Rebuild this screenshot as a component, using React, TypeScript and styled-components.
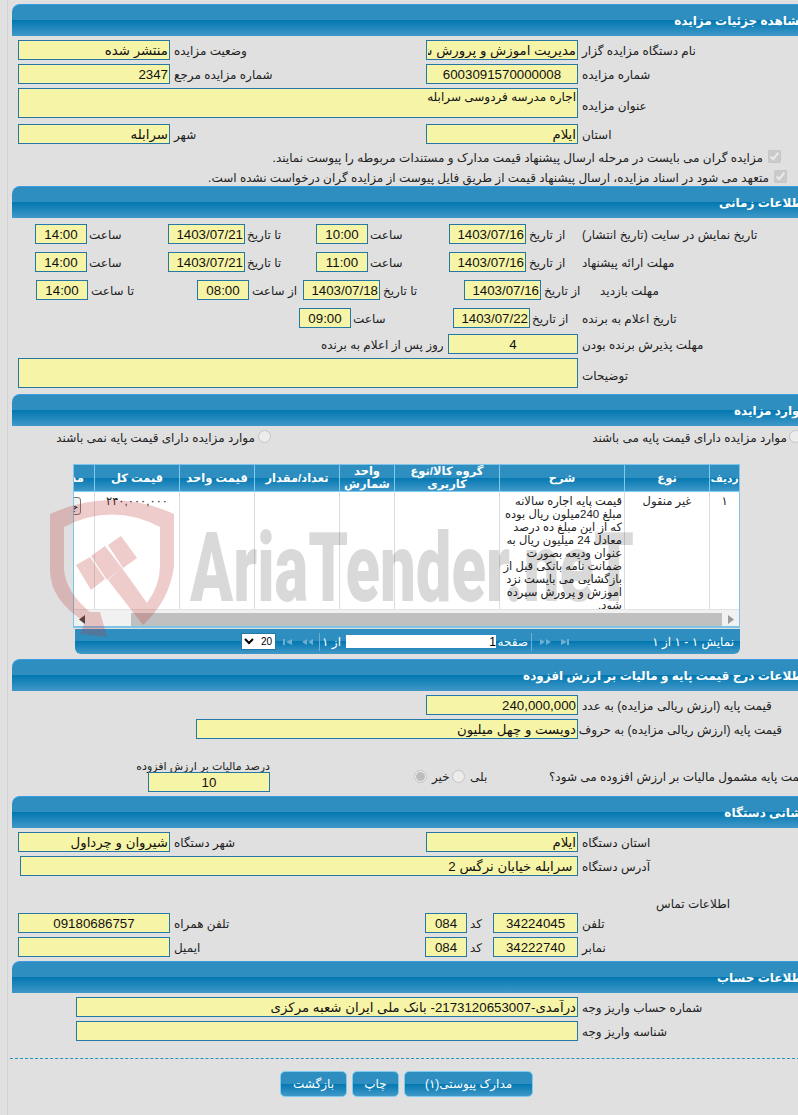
import React from 'react';
import styled, { createGlobalStyle } from 'styled-components';

/**
 * Shared values.
 */

const fontStack = '"Liberation Sans", "DejaVu Sans", sans-serif';
const barGradient = 'linear-gradient(to bottom, #2e8ebf 0%, #2e8ebf 49%, #0478b1 50%, #4098c8 100%)';
const gridColumns = '30px 85px 125px 105px 55px 85px 75px 85px 21px';

/**
 * `GlobalStyle` component.
 */

const GlobalStyle = createGlobalStyle`
  html, body {
    background: #e0e0e0;
    margin: 0;
    overflow: hidden;
    padding: 0;
  }
`;

/**
 * `Page` styled component.
 */

const Page = styled.div`
  color: #222;
  font-family: ${fontStack};
  font-size: 12px;
  height: 1115px;
  overflow: hidden;
  position: relative;
  width: 798px;
`;

/**
 * `Content` styled component.
 */

const Content = styled.main`
  border-left: 1px solid #d2d2d2;
  box-sizing: border-box;
  height: 1115px;
  margin-left: 7px;
  padding: 4px 0 0 4px;
  width: 1000px;
`;

/**
 * `SectionHeader` styled component.
 */

const SectionHeader = styled.h2<{ $mt?: number }>`
  background: ${barGradient};
  border-radius: 8px 0 0 0;
  border-top: 1px solid #3a9be0;
  box-sizing: border-box;
  color: #fff;
  direction: rtl;
  font-size: 12px;
  font-weight: bold;
  height: 32px;
  line-height: 33px;
  margin: ${p => p.$mt ?? 0}px 0 0;
  padding-right: 5px;
  white-space: nowrap;
  width: 800px;
`;

/**
 * `Row` styled component.
 */

const Row = styled.div<{ $mt?: number; $h?: number }>`
  align-items: center;
  display: flex;
  height: ${p => p.$h ?? 20}px;
  margin-top: ${p => p.$mt ?? 4}px;
`;

/**
 * `Field` styled component.
 */

const Field = styled.input.attrs({ dir: 'rtl', readOnly: true })<{
  $w: number;
  $ml?: number;
  $center?: boolean;
}>`
  background: #f6f4a6;
  border: 1px solid #2378a8;
  border-radius: 0;
  box-sizing: border-box;
  color: #111;
  flex: none;
  font-family: ${fontStack};
  font-size: 13.3px;
  height: 20px;
  margin: 0 0 0 ${p => p.$ml ?? 0}px;
  outline: none;
  padding: 0 1px;
  text-align: ${p => (p.$center ? 'center' : 'right')};
  width: ${p => p.$w}px;
`;

/**
 * `TextField` styled component.
 */

const TextField = styled.textarea.attrs({ dir: 'rtl', readOnly: true })<{
  $w: number;
  $ml?: number;
  $h: number;
}>`
  background: #f6f4a6;
  border: 1px solid #2378a8;
  box-sizing: border-box;
  color: #111;
  flex: none;
  font-family: ${fontStack};
  font-size: 12px;
  height: ${p => p.$h}px;
  margin: 0 0 0 ${p => p.$ml ?? 0}px;
  outline: none;
  overflow: hidden;
  padding: 1px 1px 0;
  resize: none;
  width: ${p => p.$w}px;
`;

/**
 * `Label` styled component.
 */

const Label = styled.span<{ $w: number; $ml?: number; $end?: boolean; $pt?: number }>`
  direction: rtl;
  flex: none;
  margin-left: ${p => p.$ml ?? 0}px;
  padding-top: ${p => p.$pt ?? 2}px;
  text-align: ${p => (p.$end ? 'right' : 'left')};
  white-space: nowrap;
  width: ${p => p.$w}px;
`;

/**
 * `Check` styled component.
 */

const Check = styled.input.attrs({ type: 'checkbox', disabled: true, defaultChecked: true })<{
  $ml: number;
}>`
  flex: none;
  height: 13px;
  margin: 0 0 0 ${p => p.$ml}px;
  width: 13px;
`;

/**
 * `Radio` styled component.
 */

const Radio = styled.input.attrs({ type: 'radio', disabled: true })<{
  $ml?: number;
  $on?: boolean;
}>`
  appearance: none;
  background: ${p => (p.$on ? 'radial-gradient(circle, #bdbdbd 0 4px, #ececec 5px)' : '#ececec')};
  border: 1px solid #c4c4c4;
  border-radius: 50%;
  box-sizing: border-box;
  flex: none;
  height: 13px;
  margin: 0 0 0 ${p => p.$ml ?? 0}px;
  width: 13px;
`;

/**
 * `Grid` styled component.
 */

const Grid = styled.div`
  background: #fff;
  border: 1px solid #7cc4e8;
  border-width: 1px 1px 2px 1px;
  box-sizing: border-box;
  direction: rtl;
  height: 164px;
  margin: 21px 0 0 61px;
  overflow: hidden;
  width: 667px;
`;

/**
 * `GridHead` styled component.
 */

const GridHead = styled.div`
  background: ${barGradient};
  border-bottom: 1px solid #7ccbf0;
  box-sizing: border-box;
  display: grid;
  grid-template-columns: ${gridColumns};
  height: 27px;
`;

/**
 * `HeadCell` styled component.
 */

const HeadCell = styled.div<{ $small?: boolean }>`
  align-items: center;
  border-left: 1px solid #7ccbf0;
  box-sizing: border-box;
  color: #fff;
  display: flex;
  font-size: ${p => (p.$small ? 10.5 : 11.5)}px;
  font-weight: bold;
  justify-content: center;
  line-height: 13px;
  overflow: hidden;
  text-align: center;
  white-space: pre-line;
`;

/**
 * `ClippedHeadCell` styled component.
 */

const ClippedHeadCell = styled(HeadCell)`
  border-left: 0;
  justify-content: flex-start;
  padding-right: 10px;
  white-space: nowrap;
`;

/**
 * `GridBody` styled component.
 */

const GridBody = styled.div`
  border-bottom: 1px solid #e2e2e2;
  box-sizing: border-box;
  display: grid;
  grid-template-columns: ${gridColumns};
  height: 118px;
`;

/**
 * `BodyCell` styled component.
 */

const BodyCell = styled.div<{ $center?: boolean }>`
  border-left: 1px solid #dcdcdc;
  box-sizing: border-box;
  color: #222;
  font-size: 11.5px;
  line-height: 13px;
  overflow: hidden;
  padding: 3px 2px 0;
  text-align: ${p => (p.$center ? 'center' : 'right')};
`;

/**
 * `ButtonCell` styled component.
 */

const ButtonCell = styled(BodyCell)`
  border-left: 0;
  padding: 0 13px 0 0;
`;

/**
 * `CellButton` styled component.
 */

const CellButton = styled.button`
  background: #f0f0f0;
  border: 1px solid #777;
  border-radius: 3px;
  font-family: ${fontStack};
  font-size: 11px;
  height: 18px;
  margin: 5px 0 0 0;
  padding: 0 2px;
  text-align: right;
  white-space: nowrap;
  width: 50px;
`;

/**
 * `ScrollBar` styled component.
 */

const ScrollBar = styled.div`
  align-items: center;
  background: #f1f1f1;
  display: flex;
  height: 16px;
  padding: 1px 5px 0 5px;
`;

/**
 * `ScrollThumb` styled component.
 */

const ScrollThumb = styled.div`
  background: #c0c0c0;
  flex: 1;
  height: 13px;
  margin: 0 6px 0 46px;
`;

/**
 * `Pager` styled component.
 */

const Pager = styled.div`
  align-items: center;
  background: ${barGradient};
  border-radius: 0 0 6px 6px;
  box-sizing: border-box;
  color: #fff;
  direction: rtl;
  display: flex;
  height: 25px;
  margin: 1px 0 0 63px;
  padding-right: 6px;
  width: 665px;
`;

/**
 * `PagerText` styled component.
 */

const PagerText = styled.span<{ $w: number; $ms?: number }>`
  flex: none;
  margin-inline-start: ${p => p.$ms ?? 0}px;
  white-space: nowrap;
  width: ${p => p.$w}px;
`;

/**
 * `PagerRule` styled component.
 */

const PagerRule = styled.span<{ $ms: number }>`
  background: #6fb0d0;
  flex: none;
  height: 18px;
  margin-inline-start: ${p => p.$ms}px;
  width: 1px;
`;

/**
 * `PagerIcons` styled component.
 */

const PagerIcons = styled.svg<{ $ms: number }>`
  flex: none;
  height: 8px;
  margin-inline-start: ${p => p.$ms}px;
  width: 30px;
`;

/**
 * `PageInput` styled component.
 */

const PageInput = styled.input.attrs({ dir: 'rtl', readOnly: true })`
  background: #fff;
  border: 0;
  box-sizing: border-box;
  color: #000;
  flex: none;
  font-family: ${fontStack};
  font-size: 12px;
  height: 13px;
  margin: 0 4px 0 0;
  outline: none;
  padding: 0;
  width: 150px;
`;

/**
 * `PageSize` styled component.
 */

const PageSize = styled.span`
  align-items: center;
  background: #fff;
  border: 1px solid #2378a8;
  box-sizing: border-box;
  color: #000;
  direction: ltr;
  display: flex;
  flex: none;
  font-size: 10px;
  height: 17px;
  justify-content: space-between;
  margin-right: 7px;
  padding: 0 3px 0 2px;
  width: 35px;
`;

/**
 * `Dashed` styled component.
 */

const Dashed = styled.hr`
  border: 0;
  border-top: 1px dashed #2e8ebf;
  margin: 17px 0 0 -2px;
  width: 790px;
`;

/**
 * `Actions` styled component.
 */

const Actions = styled.div`
  display: flex;
  gap: 5px;
  margin: 12px 0 0 268px;
`;

/**
 * `ActionButton` styled component.
 */

const ActionButton = styled.button<{ $w: number }>`
  background: ${barGradient};
  border: 1px solid #7ccbf0;
  border-radius: 5px;
  color: #fff;
  direction: rtl;
  font-family: ${fontStack};
  font-size: 12px;
  height: 26px;
  padding: 0;
  width: ${p => p.$w}px;
`;

/**
 * `TaxColumn` styled component.
 */

const TaxColumn = styled.div`
  display: flex;
  flex: none;
  flex-direction: column;
  margin-left: 123px;
  width: 135px;
`;

/**
 * `TaxLabel` styled component.
 */

const TaxLabel = styled.span`
  direction: rtl;
  font-size: 11px;
  height: 12px;
  line-height: 12px;
  white-space: nowrap;
`;

/**
 * `TaxRow` styled component.
 */

const TaxRow = styled.div`
  display: flex;
  height: 32px;
  margin: 21px 0 4px;
`;

/**
 * `TaxChoice` styled component.
 */

const TaxChoice = styled.div`
  align-items: center;
  display: flex;
  height: 20px;
  margin-top: 6px;
`;

/**
 * `Watermark` styled component.
 */

const Watermark = styled.div`
  inset: 0;
  pointer-events: none;
  position: absolute;
`;

/**
 * `WatermarkShield` styled component.
 */

const WatermarkShield = styled.svg`
  height: 145px;
  left: 45px;
  position: absolute;
  top: 495px;
  width: 140px;
`;

/**
 * `WatermarkName` styled component.
 */

const WatermarkName = styled.span`
  color: rgba(0, 0, 0, 0.15);
  font-family: Roboto, sans-serif;
  font-size: 96px;
  font-weight: 900;
  left: 190px;
  line-height: 96px;
  position: absolute;
  top: 520px;
  transform: scaleX(0.66);
  transform-origin: left center;
  white-space: nowrap;
`;

/**
 * `App` component.
 */

export default function App() {
  return (
    <Page>
      <GlobalStyle />
      <Content>
        <SectionHeader>{'مشاهده جزئیات مزایده'}</SectionHeader>
        <Row>
          <Field $ml={6} $w={152} value={'منتشر شده'} />
          <Label $ml={4} $w={252}>{'وضعیت مزایده'}</Label>
          <Field $w={152} value={'مدیریت اموزش و پرورش شهرستان سرابله'} />
          <Label $ml={4} $w={200}>{'نام دستگاه مزایده گزار'}</Label>
        </Row>
        <Row>
          <Field $ml={6} $w={152} value={'2347'} />
          <Label $ml={4} $w={252}>{'شماره مزایده مرجع'}</Label>
          <Field $center $w={152} value={'6003091570000008'} />
          <Label $ml={4} $w={200}>{'شماره مزایده'}</Label>
        </Row>
        <Row $h={30}>
          <TextField $h={30} $ml={6} $w={560} value={'اجاره مدرسه فردوسی سرابله'} />
          <Label $ml={4} $pt={5} $w={200}>{'عنوان مزایده'}</Label>
        </Row>
        <Row $mt={6}>
          <Field $ml={6} $w={152} value={'سرابله'} />
          <Label $ml={4} $w={252}>{'شهر'}</Label>
          <Field $w={152} value={'ایلام'} />
          <Label $ml={4} $w={200}>{'استان'}</Label>
        </Row>
        <Row $h={19} $mt={3}>
          <Label $end $w={751}>{'مزایده گران می بایست در مرحله ارسال پیشنهاد قیمت مدارک و مستندات مربوطه را پیوست نمایند.'}</Label>
          <Check $ml={5} />
        </Row>
        <Row $h={19} $mt={1}>
          <Label $end $w={757}>{'متعهد می شود در اسناد مزایده، ارسال پیشنهاد قیمت از طریق فایل پیوست از مزایده گران درخواست نشده است.'}</Label>
          <Check $ml={5} />
        </Row>

        <SectionHeader>{'اطلاعات زمانی'}</SectionHeader>
        <Row $mt={6}>
          <Field $center $ml={23} $w={52} value={'14:00'} />
          <Label $ml={2} $w={79}>{'ساعت'}</Label>
          <Field $w={77} value={'1403/07/21'} />
          <Label $ml={2} $w={69}>{'تا تاریخ'}</Label>
          <Field $center $w={52} value={'10:00'} />
          <Label $ml={2} $w={79}>{'ساعت'}</Label>
          <Field $w={77} value={'1403/07/16'} />
          <Label $ml={3} $w={53}>{'از تاریخ'}</Label>
          <Label $w={200}>{'تاریخ نمایش در سایت (تاریخ انتشار)'}</Label>
        </Row>
        <Row $mt={8}>
          <Field $center $ml={23} $w={52} value={'14:00'} />
          <Label $ml={2} $w={79}>{'ساعت'}</Label>
          <Field $w={77} value={'1403/07/21'} />
          <Label $ml={2} $w={69}>{'تا تاریخ'}</Label>
          <Field $center $w={52} value={'11:00'} />
          <Label $ml={2} $w={79}>{'ساعت'}</Label>
          <Field $w={77} value={'1403/07/16'} />
          <Label $ml={3} $w={53}>{'از تاریخ'}</Label>
          <Label $w={200}>{'مهلت ارائه پیشنهاد'}</Label>
        </Row>
        <Row $mt={8}>
          <Field $center $ml={24} $w={52} value={'14:00'} />
          <Label $ml={3} $w={106}>{'تا ساعت'}</Label>
          <Field $center $w={52} value={'08:00'} />
          <Label $ml={3} $w={51}>{'از ساعت'}</Label>
          <Field $w={77} value={'1403/07/18'} />
          <Label $ml={3} $w={81}>{'تا تاریخ'}</Label>
          <Field $w={77} value={'1403/07/16'} />
          <Label $ml={3} $w={56}>{'از تاریخ'}</Label>
          <Label $w={150}>{'مهلت بازدید'}</Label>
        </Row>
        <Row $mt={8}>
          <Field $center $ml={287} $w={52} value={'09:00'} />
          <Label $ml={2} $w={100}>{'ساعت'}</Label>
          <Field $w={77} value={'1403/07/22'} />
          <Label $ml={2} $w={50}>{'از تاریخ'}</Label>
          <Label $w={200}>{'تاریخ اعلام به برنده'}</Label>
        </Row>
        <Row $mt={6}>
          <Label $ml={309} $w={127}>{'روز پس از اعلام به برنده'}</Label>
          <Field $center $w={130} value={'4'} />
          <Label $ml={4} $w={200}>{'مهلت پذیرش برنده بودن'}</Label>
        </Row>
        <Row $h={30}>
          <TextField $h={30} $ml={6} $w={560} value={''} />
          <Label $ml={4} $pt={5} $w={200}>{'توضیحات'}</Label>
        </Row>

        <SectionHeader $mt={6}>{'موارد مزایده'}</SectionHeader>
        <Row $h={13}>
          <Label $end $ml={43} $w={200}>{'موارد مزایده دارای قیمت پایه نمی باشند'}</Label>
          <Radio $ml={3} />
          <Label $end $ml={322} $w={194}>{'موارد مزایده دارای قیمت پایه می باشند'}</Label>
          <Radio $ml={2} />
        </Row>
        <Grid>
          <GridHead>
            <HeadCell $small>{'ردیف'}</HeadCell>
            <HeadCell>{'نوع'}</HeadCell>
            <HeadCell>{'شرح'}</HeadCell>
            <HeadCell>{'گروه کالا/نوع\nکاربری'}</HeadCell>
            <HeadCell>{'واحد\nشمارش'}</HeadCell>
            <HeadCell>{'تعداد/مقدار'}</HeadCell>
            <HeadCell>{'قیمت واحد'}</HeadCell>
            <HeadCell>{'قیمت کل'}</HeadCell>
            <ClippedHeadCell>{'مدارک'}</ClippedHeadCell>
          </GridHead>
          <GridBody>
            <BodyCell $center>{'۱'}</BodyCell>
            <BodyCell $center>{'غیر منقول'}</BodyCell>
            <BodyCell>
              {'قیمت پایه اجاره سالانه مبلغ 240میلون ریال بوده که از این مبلغ ده درصد معادل 24 میلیون ریال به عنوان ودیعه بصورت ضمانت نامه بانکی قبل از بازگشایی می بایست نزد اموزش و پرورش سپرده شود.'}
            </BodyCell>
            <BodyCell />
            <BodyCell />
            <BodyCell />
            <BodyCell />
            <BodyCell $center>{'۲۴۰,۰۰۰,۰۰۰'}</BodyCell>
            <ButtonCell>
              <CellButton>{'جزئیات'}</CellButton>
            </ButtonCell>
          </GridBody>
          <ScrollBar>
            <svg height={9} viewBox={'0 0 6 9'} width={6}>
              <polygon fill={'#9a9a9a'} points={'0,0 6,4.5 0,9'} />
            </svg>
            <ScrollThumb />
            <svg height={9} viewBox={'0 0 6 9'} width={6}>
              <polygon fill={'#444'} points={'6,0 0,4.5 6,9'} />
            </svg>
          </ScrollBar>
        </Grid>
        <Pager>
          <PagerText $w={159}>{'نمایش ۱ - ۱ از ۱'}</PagerText>
          <PagerIcons $ms={5} viewBox={'0 0 30 8'}>
            <g fill={'#6fb0d0'}>
              <polygon points={'0,1 5,4 0,7'} />
              <polygon points={'6,1 11,4 6,7'} />
              <polygon points={'21,1 27,4 21,7'} />
              <rect height={6} width={2} x={27} y={1} />
            </g>
          </PagerIcons>
          <PagerRule $ms={8} />
          <PagerText $ms={3} $w={28}>{'صفحه'}</PagerText>
          <PageInput value={'1'} />
          <PagerText $ms={5} $w={19}>{'از ۱'}</PagerText>
          <PagerRule $ms={2} />
          <PagerIcons $ms={6} viewBox={'0 0 30 8'}>
            <g fill={'#6fb0d0'}>
              <rect height={6} width={2} x={0} y={1} />
              <polygon points={'9,1 3,4 9,7'} />
              <polygon points={'24,1 19,4 24,7'} />
              <polygon points={'30,1 25,4 30,7'} />
            </g>
          </PagerIcons>
          <PageSize>
            <svg height={7} viewBox={'0 0 10 7'} width={10}>
              <path d={'M1 1 L5 5 L9 1'} fill={'none'} stroke={'#000'} strokeWidth={2} />
            </svg>
            {'20'}
          </PageSize>
        </Pager>

        <SectionHeader $mt={5}>{'اطلاعات درج قیمت پایه و مالیات بر ارزش افزوده'}</SectionHeader>
        <Row>
          <Field $ml={414} $w={152} value={'240,000,000'} />
          <Label $ml={4} $w={200}>{'قیمت پایه (ارزش ریالی مزایده) به عدد'}</Label>
        </Row>
        <Row>
          <Field $ml={184} $w={382} value={'دویست و چهل میلیون'} />
          <Label $ml={4} $w={200}>{'قیمت پایه (ارزش ریالی مزایده) به حروف'}</Label>
        </Row>
        <TaxRow>
          <TaxColumn>
            <TaxLabel>{'درصد مالیات بر ارزش افزوده'}</TaxLabel>
            <Field $center $ml={13} $w={122} value={'10'} />
          </TaxColumn>
          <TaxChoice>
            <Radio $ml={144} $on />
            <Label $ml={5} $w={20}>{'خیر'}</Label>
            <Radio />
            <Label $ml={5} $w={79}>{'بلی'}</Label>
            <Label $w={300}>{'قیمت پایه مشمول مالیات بر ارزش افزوده می شود؟'}</Label>
          </TaxChoice>
        </TaxRow>

        <SectionHeader>{'نشانی دستگاه'}</SectionHeader>
        <Row>
          <Field $ml={6} $w={152} value={'شیروان و چرداول'} />
          <Label $ml={4} $w={252}>{'شهر دستگاه'}</Label>
          <Field $w={152} value={'ایلام'} />
          <Label $ml={4} $w={200}>{'استان دستگاه'}</Label>
        </Row>
        <Row>
          <Field $ml={8} $w={558} value={' سرابله خیابان نرگس 2'} />
          <Label $ml={4} $w={200}>{'آدرس دستگاه'}</Label>
        </Row>
        <Row $h={16} $mt={19}>
          <Label $ml={644} $w={120}>{'اطلاعات تماس'}</Label>
        </Row>
        <Row $mt={2}>
          <Field $center $ml={6} $w={152} value={'09180686757'} />
          <Label $ml={4} $w={251}>{'تلفن همراه'}</Label>
          <Field $center $w={42} value={'084'} />
          <Label $ml={3} $w={23}>{'کد'}</Label>
          <Field $center $w={85} value={'34224045'} />
          <Label $ml={4} $w={100}>{'تلفن'}</Label>
        </Row>
        <Row>
          <Field $center $ml={6} $w={152} value={''} />
          <Label $ml={4} $w={251}>{'ایمیل'}</Label>
          <Field $center $w={42} value={'084'} />
          <Label $ml={3} $w={23}>{'کد'}</Label>
          <Field $center $w={85} value={'34222740'} />
          <Label $ml={4} $w={100}>{'نمابر'}</Label>
        </Row>

        <SectionHeader $mt={4}>{'اطلاعات حساب'}</SectionHeader>
        <Row>
          <Field $ml={64} $w={502} value={'درآمدی-2173120653007- بانک ملی ایران شعبه مرکزی'} />
          <Label $ml={4} $w={200}>{'شماره حساب واریز وجه'}</Label>
        </Row>
        <Row>
          <Field $ml={64} $w={502} value={''} />
          <Label $ml={4} $w={200}>{'شناسه واریز وجه'}</Label>
        </Row>
        <Dashed />
        <Actions>
          <ActionButton $w={67}>{'بازگشت'}</ActionButton>
          <ActionButton $w={47}>{'چاپ'}</ActionButton>
          <ActionButton $w={129}>{'مدارک پیوستی(۱)'}</ActionButton>
        </Actions>
      </Content>
      <Watermark>
        <WatermarkName>{'AriaTender.neT'}</WatermarkName>
        <WatermarkShield viewBox={'45 495 140 145'}>
          <g fill={'rgba(190, 50, 50, 0.25)'}>
            <path d={'M50 514 Q112 486 174 514 L174 566 Q170 600 143 625 L108 580 L122 568 L147 603 Q160 585 160 566 L160 527 Q112 502 64 527 L64 570 Q66 592 90 612 L100 612 L107 637 L80 634 L85 622 Q50 600 50 570 Z'} />
            <polygon points={'76,565 90,557 105,579 91,590'} />
            <polygon points={'91,556 105,546 122,568 107,580'} />
            <polygon points={'108,545 121,536 137,558 123,568'} />
          </g>
        </WatermarkShield>
      </Watermark>
    </Page>
  );
}
